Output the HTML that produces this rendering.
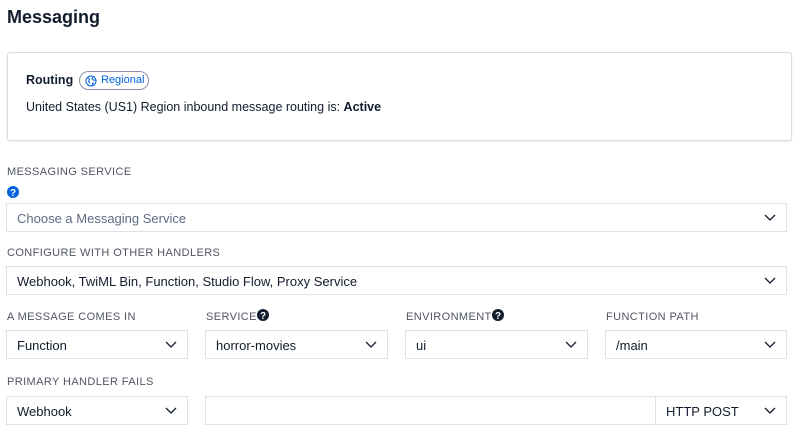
<!DOCTYPE html>
<html><head><style>
*{box-sizing:border-box;margin:0;padding:0}
body{width:800px;height:435px;background:#fff;font-family:"Liberation Sans",sans-serif;color:#121c2d;position:relative;overflow:hidden}
.a{position:absolute}
h1{position:absolute;left:7px;top:7px;font-size:18px;font-weight:700}
.card{left:7px;top:52px;width:785px;height:89px;border:1px solid #d8dbe0;border-radius:3px;box-shadow:0 1px 2px rgba(0,0,0,.08)}
.lbl{position:absolute;font-size:11px;color:#4f5560;letter-spacing:.4px;font-weight:400}
.sel{position:absolute;height:29px;border:1px solid #dde0e4;font-size:13px;color:#121c2d;padding:7px 0 0 10px;background:#fff}
.sel svg{position:absolute;right:10px;top:10px}
</style></head><body>
<h1>Messaging</h1>
<div class="a card">
 <div class="a" style="left:18px;top:20px;font-size:12.5px;font-weight:700">Routing</div>
 <div class="a" style="left:71px;top:18px;height:19px;border:1px solid #8891aa;border-radius:10px;font-size:11px;color:#0263e0;padding:2px 4px 0 21px;white-space:nowrap">Regional
  <svg class="a" style="left:5px;top:3px" width="12" height="12" viewBox="0 0 12 12" fill="none" stroke="#0263e0" stroke-width="1"><circle cx="6" cy="6" r="5"/><path d="M3 2.5l1.5 2 -1 2 1.5 1.5M8 1.8l-1 2 2 1.5 1.5-.3M7 10.5l.5-2 1.5-.5"/></svg></div>
 <div class="a" style="left:18px;top:47px;font-size:12.5px">United States (US1) Region inbound message routing is: <b>Active</b></div>
</div>
<div class="lbl" style="left:7px;top:166px">MESSAGING SERVICE</div>
<svg class="a" style="left:7px;top:186px" width="12" height="12" viewBox="0 0 12 12"><circle cx="6" cy="6" r="6" fill="#0263e0"/><text x="6" y="10" font-size="10" font-weight="700" fill="#fff" text-anchor="middle" font-family="Liberation Sans">?</text></svg>
<div class="sel" style="left:6px;top:203px;width:781px;color:#606b85">Choose a Messaging Service<svg width="12" height="8" viewBox="0 0 12 8"><path d="M1 1l5 5 5-5" stroke="#121c2d" stroke-width="1.3" fill="none"/></svg></div>
<div class="lbl" style="left:7px;top:247px">CONFIGURE WITH OTHER HANDLERS</div>
<div class="sel" style="left:6px;top:266px;width:781px">Webhook, TwiML Bin, Function, Studio Flow, Proxy Service<svg width="12" height="8" viewBox="0 0 12 8"><path d="M1 1l5 5 5-5" stroke="#121c2d" stroke-width="1.3" fill="none"/></svg></div>
<div class="lbl" style="left:7px;top:311px">A MESSAGE COMES IN</div>
<div class="lbl" style="left:206px;top:311px">SERVICE</div>
<svg class="a" style="left:257px;top:309px" width="12" height="12" viewBox="0 0 12 12"><circle cx="6" cy="6" r="6" fill="#121c2d"/><text x="6" y="10" font-size="10" font-weight="700" fill="#fff" text-anchor="middle" font-family="Liberation Sans">?</text></svg>
<div class="lbl" style="left:406px;top:311px">ENVIRONMENT</div>
<svg class="a" style="left:492px;top:309px" width="12" height="12" viewBox="0 0 12 12"><circle cx="6" cy="6" r="6" fill="#121c2d"/><text x="6" y="10" font-size="10" font-weight="700" fill="#fff" text-anchor="middle" font-family="Liberation Sans">?</text></svg>
<div class="lbl" style="left:606px;top:311px">FUNCTION PATH</div>
<div class="sel" style="left:6px;top:330px;width:182px">Function<svg width="12" height="8" viewBox="0 0 12 8"><path d="M1 1l5 5 5-5" stroke="#121c2d" stroke-width="1.3" fill="none"/></svg></div>
<div class="sel" style="left:205px;top:330px;width:183px">horror-movies<svg width="12" height="8" viewBox="0 0 12 8"><path d="M1 1l5 5 5-5" stroke="#121c2d" stroke-width="1.3" fill="none"/></svg></div>
<div class="sel" style="left:405px;top:330px;width:183px">ui<svg width="12" height="8" viewBox="0 0 12 8"><path d="M1 1l5 5 5-5" stroke="#121c2d" stroke-width="1.3" fill="none"/></svg></div>
<div class="sel" style="left:605px;top:330px;width:182px">/main<svg width="12" height="8" viewBox="0 0 12 8"><path d="M1 1l5 5 5-5" stroke="#121c2d" stroke-width="1.3" fill="none"/></svg></div>
<div class="lbl" style="left:7px;top:376px">PRIMARY HANDLER FAILS</div>
<div class="sel" style="left:6px;top:396px;width:182px">Webhook<svg width="12" height="8" viewBox="0 0 12 8"><path d="M1 1l5 5 5-5" stroke="#121c2d" stroke-width="1.3" fill="none"/></svg></div>
<div class="sel" style="left:205px;top:396px;width:451px"></div>
<div class="sel" style="left:655px;top:396px;width:132px">HTTP POST<svg width="12" height="8" viewBox="0 0 12 8"><path d="M1 1l5 5 5-5" stroke="#121c2d" stroke-width="1.3" fill="none"/></svg></div>
</body></html>
